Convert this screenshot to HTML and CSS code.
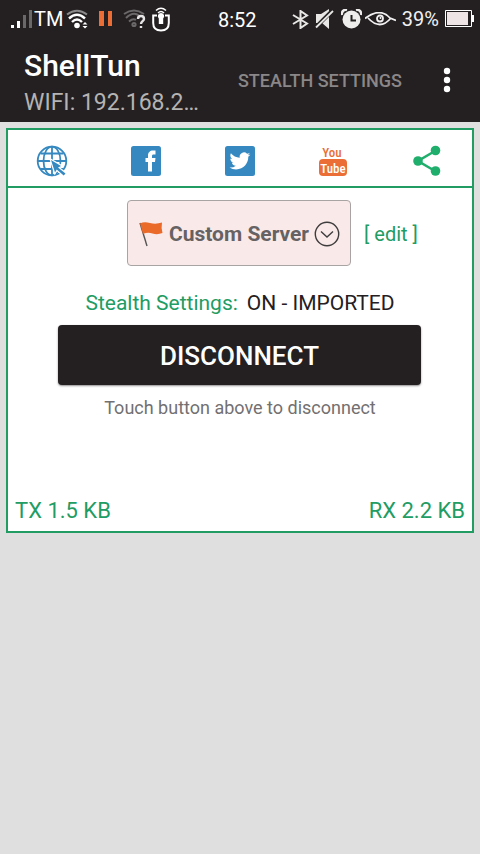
FILE: index.html
```html
<!DOCTYPE html>
<html lang="en">
<head>
<meta charset="utf-8">
<meta name="viewport" content="width=device-width, initial-scale=1">
<title>ShellTun</title>
<link rel="stylesheet" href="styles.css">
</head>
<body>
<header class="top">
  <div class="status">
    <div class="status-side">
      <svg class="signal" width="22" height="18" viewBox="0 0 22 18" aria-hidden="true">
        <path fill="#fff" d="M0 15h3v3H0zM6 11h3v7H6z"/>
        <path fill="#6b6869" d="M12 5h3v13h-3zM18 0h3v18h-3z"/>
      </svg>
      <span class="carrier">TM</span>
      <svg class="wifi" width="23" height="20" viewBox="0 0 23 20" fill="none" stroke="#fff" stroke-width="2" aria-hidden="true">
        <path d="M1 5.500Q11 -2 21 5.500" stroke="#8b8989"/>
        <path d="M3 9.500Q11 2 19 9.500M6 13Q11 8 16 13" stroke-width="2.400"/>
        <circle cx="11" cy="16.500" r="2.800" fill="#fff" stroke="none"/>
        <path d="M16.500 15.500l2.500-2.500 2.500 2.500zM16.500 17l2.500 2.500 2.500-2.500z" fill="#fff" stroke="none"/>
      </svg>
      <svg class="pause" width="14" height="16" viewBox="0 0 14 16" aria-hidden="true"><path fill="#ea6e35" d="M0 0h5v15H0zM9 0h4v15H9z"/></svg>
      <svg class="wifi-unknown" width="23" height="20" viewBox="0 0 23 20" fill="none" stroke="#6b6869" stroke-width="2" aria-hidden="true">
        <path d="M1 5Q11 -2 21 5M3 9Q10 2 16 6.500M6 12.500Q10 9 13 11"/>
        <circle cx="11" cy="15.500" r="1.600"/>
        <path d="M15 10q0-3 3-3t3 3c0 2-3 2.500-3 5M18 17v2" stroke="#e6e4e4" stroke-width="2.400"/>
      </svg>
      <svg class="tether" width="18" height="25" viewBox="0 0 18 25" fill="none" stroke="#fff" stroke-width="2" aria-hidden="true">
        <path d="M4 3.500Q9 -1 14 3.500M6 6Q9 3 12 6" stroke-width="1.500"/>
        <path d="M5 8.500H1.200V16q0 7.500 7.800 7.500t7.800-7.500V8.500H13"/>
        <path d="M9 6a3.200 3.200 0 0 1 2.200 5.500V17H6.800v-5.500A3.200 3.200 0 0 1 9 6z" fill="#fff" stroke="none"/>
      </svg>
    </div>
    <time class="clock">8:52</time>
    <div class="status-side status-right">
      <svg width="17" height="19" viewBox="0 0 17 19" fill="none" stroke="#e9e6e6" stroke-width="2" aria-hidden="true"><path d="M1 5l14 8.500-6.500 4.500V1L15 5.500 1 14"/></svg>
      <svg class="mute" width="20" height="20" viewBox="0 0 20 20" aria-hidden="true">
        <path fill="#e9e6e6" d="M1 5h5l8-5v20l-7-6H1z"/>
        <path stroke="#242021" stroke-width="4" d="M0 19L18 1"/>
        <path stroke="#e9e6e6" stroke-width="1.800" d="M1 18.500L18 2"/>
      </svg>
      <svg class="alarm" width="21" height="20" viewBox="0 0 21 20" fill="none" aria-hidden="true">
        <circle cx="10.500" cy="10.500" r="9" fill="#efecec"/>
        <path d="M1 6a4 4 0 0 1 5-5M20 6a4 4 0 0 0-5-5" stroke="#242021" stroke-width="4"/>
        <path d="M1 6a4 4 0 0 1 5-5M20 6a4 4 0 0 0-5-5" stroke="#efecec" stroke-width="2.500"/>
        <path d="M10.500 6v5.500H15" stroke="#242021" stroke-width="2"/>
      </svg>
      <svg class="eye" width="31" height="14" viewBox="0 0 31 14" fill="none" stroke="#f2f0f0" stroke-width="1.800" aria-hidden="true">
        <path d="M0 6.500Q15-5 25 6l6 2.500M3 6Q15 19 26 6"/>
        <circle cx="15" cy="6.500" r="3"/><circle cx="15.500" cy="6" r="1" fill="#fff" stroke="none"/>
      </svg>
      <span class="percent">39%</span>
      <svg class="battery" width="29" height="18" viewBox="0 0 29 18" fill="none" aria-hidden="true">
        <path d="M.5.5h26v16H.5z" stroke="#fff"/><path d="M2 2h21v13H2z" fill="#eee4e5"/><path d="M28 5v7" stroke="#fff" stroke-width="2"/>
      </svg>
    </div>
  </div>
  <div class="appbar">
    <div class="titles">
      <h1 class="title">ShellTun</h1>
      <p class="subtitle">WIFI: 192.168.2…</p>
    </div>
    <button class="action" type="button">STEALTH SETTINGS</button>
    <button class="more" type="button" aria-label="More options">
      <svg width="8" height="26" viewBox="0 0 8 26" fill="#fff" aria-hidden="true"><circle cx="4" cy="4" r="3.200"/><circle cx="4" cy="13" r="3.200"/><circle cx="4" cy="22" r="3.200"/></svg>
    </button>
  </div>
</header>
<main class="card">
  <nav class="links">
    <a href="#web" aria-label="Website">
      <svg width="32" height="32" viewBox="0 0 32 32" fill="none" stroke="#3589c0" stroke-width="1.800" aria-hidden="true">
        <circle cx="16" cy="16" r="14.300"/><ellipse cx="16" cy="16" rx="8.500" ry="14.300"/>
        <path d="M16 2v28M2 16h28M4.500 8.500h23M4.500 24h23"/>
        <path d="M15 15l10 6-3 1.500 7.500 6-1.800 2-7-6-1.700 3z" fill="#3589c0" stroke="#fff" stroke-width="2.500" paint-order="stroke"/>
      </svg>
    </a>
    <a href="#facebook" aria-label="Facebook">
      <svg width="32" height="32" viewBox="0 0 32 32" aria-hidden="true">
        <rect x="1" y="1" width="30" height="30" rx="2.500" fill="#3589c0"/>
        <path fill="#fff" d="M18 26.500V17h-2.500v-4H18v-2.500C18 7.500 20 5.500 23 5.500h2.500v4h-2c-1 0-1.500.5-1.500 1.500v2h3.500l-.5 4h-3v9.500z"/>
      </svg>
    </a>
    <a href="#twitter" aria-label="Twitter">
      <svg width="32" height="32" viewBox="0 0 32 32" aria-hidden="true">
        <rect x="1" y="1" width="30" height="30" rx="2.500" fill="#3589c0"/>
        <g transform="translate(5.500 5.500) scale(.87)"><path fill="#fff" d="M23.950 4.570a10 10 0 0 1-2.820.78 4.960 4.960 0 0 0 2.160-2.720c-.95.560-2 .96-3.130 1.180a4.920 4.920 0 0 0-8.380 4.480C7.690 8.100 4.070 6.130 1.640 3.160a4.820 4.820 0 0 0-.67 2.480c0 1.700.87 3.210 2.190 4.100a4.900 4.900 0 0 1-2.230-.62v.06a4.920 4.920 0 0 0 3.950 4.830 5 5 0 0 1-2.210.08 4.940 4.940 0 0 0 4.600 3.420A9.870 9.870 0 0 1 0 19.540a14 14 0 0 0 7.560 2.210c9.050 0 14-7.500 14-13.980l-.02-.64a9.940 9.940 0 0 0 2.410-2.560z"/></g>
      </svg>
    </a>
    <a href="#youtube" aria-label="YouTube">
      <svg class="youtube" width="32" height="32" viewBox="0 0 32 32" aria-hidden="true">
        <rect x="2" y="14" width="28" height="17" rx="4" fill="#ea6e35"/>
        <text x="15" y="12" fill="#ea6e35">You</text>
        <text x="16" y="28" fill="#fff">Tube</text>
      </svg>
    </a>
    <a href="#share" aria-label="Share">
      <svg width="32" height="32" viewBox="0 0 32 32" fill="#1fae6c" aria-hidden="true">
        <path d="M24 6L7 16l17 10" fill="none" stroke="#1fae6c" stroke-width="2.600"/>
        <circle cx="7" cy="16" r="4.800"/><circle cx="24.500" cy="5.500" r="4.800"/><circle cx="24.500" cy="26" r="4.800"/>
      </svg>
    </a>
  </nav>
  <section class="server">
    <button class="picker" type="button">
      <svg width="26" height="26" viewBox="0 0 26 26" aria-hidden="true">
        <path d="M2 2L9 25" stroke="#555" stroke-width="1.400"/>
        <path fill="#ea6a2a" d="M2 2.500Q6 .5 12 2t12-.5q-1 5 .5 10.500-5 2-10 .5T5 13z"/>
      </svg>
      <span>Custom Server</span>
      <svg class="chevron" width="26" height="26" viewBox="0 0 26 26" fill="none" stroke="#3f3c3d" stroke-width="1.400" aria-hidden="true"><circle cx="13" cy="13" r="11.700"/><path d="M7 10.500l6 5.500 6-5.500"/></svg>
    </button>
    <a class="edit" href="#edit">[ edit ]</a>
  </section>
  <p class="stealth"><span class="label">Stealth Settings:</span><span>ON - IMPORTED</span></p>
  <button class="disconnect" type="button">DISCONNECT</button>
  <p class="hint">Touch button above to disconnect</p>
  <footer class="traffic"><span>TX 1.5 KB</span><span>RX 2.2 KB</span></footer>
</main>
</body>
</html>
```

FILE: styles.css
```css
* { box-sizing: border-box; }
body {
  margin: 0;
  min-height: 100vh;
  background: #dfdfdf;
  color: #242021;
  font-family: Roboto, "Liberation Sans", sans-serif;
}
h1, p { margin: 0; }
button { border: 0; padding: 0; background: none; font-family: inherit; cursor: pointer; }
a { text-decoration: none; color: inherit; }
svg { display: block; flex: none; }

.top { background: #242021; color: #fff; padding-bottom: 2px; }
.status {
  display: grid;
  grid-template-columns: 207px auto 1fr;
  align-items: center;
  height: 38px;
  padding: 0 6px 0 11px;
  font-size: 20px;
}
.status-side { display: flex; align-items: center; }
.status-right { justify-content: flex-end; gap: 6px; }
.carrier { margin: 0 3px 0 1px; }
.clock { padding-top: 2px; }
.pause { margin: 0 10px; }
.tether { margin-left: 6px; }
.percent { color: #f2f0f0; }
.eye { margin-left: -3px; }

.appbar { display: flex; align-items: center; height: 82px; padding: 2px 29px 0 24px; }
.titles { flex: 1; padding-top: 10px; }
.title { font-size: 30px; line-height: 36px; font-weight: 500; }
.subtitle { font-size: 23px; line-height: 38px; color: #b5b3b3; }
.action { font-size: 18px; font-weight: 500; color: #8b8788; }
.more { margin-left: 41px; }

.card { margin: 6px; border: 2px solid #219c63; background: #fff; }
.links {
  display: flex;
  justify-content: space-between;
  align-items: center;
  height: 58px;
  padding: 6px 29px 0 28px;
  border-bottom: 2px solid #219c63;
}
.youtube { font: 500 13px "Roboto Condensed", "Liberation Sans Narrow", Roboto, sans-serif; text-anchor: middle; }
.server { display: flex; align-items: center; gap: 12px; margin: 12px 0 0 119px; }
.picker {
  display: flex;
  align-items: center;
  gap: 5px;
  height: 66px;
  padding: 2px 10px 0;
  border: 1px solid #a9a4a4;
  border-radius: 4px;
  background: #f9eae9;
  color: #666263;
  font-size: 21px;
  font-weight: 700;
  white-space: nowrap;
}
.edit { padding: 2px 0 0 1px; font-size: 20px; color: #219c63; white-space: nowrap; }
.stealth {
  display: flex;
  justify-content: center;
  gap: 9px;
  margin-top: 24px;
  font-size: 21px;
  line-height: 26px;
}
.label, .traffic { color: #219c63; }
.disconnect {
  display: block;
  width: calc(100% - 101px);
  height: 60px;
  margin: 9px 51px 0 50px;
  padding-top: 2px;
  border-radius: 4px;
  background: #242021;
  color: #fff;
  font-size: 26px;
  font-weight: 500;
  box-shadow: 0 1px 2px #24202180;
}
.hint { margin-top: 11px; text-align: center; font-size: 18px; line-height: 24px; color: #727071; }
.traffic {
  display: flex;
  justify-content: space-between;
  margin-top: 77px;
  padding: 0 7px 6px;
  font-size: 22px;
  line-height: 28px;
}
```
